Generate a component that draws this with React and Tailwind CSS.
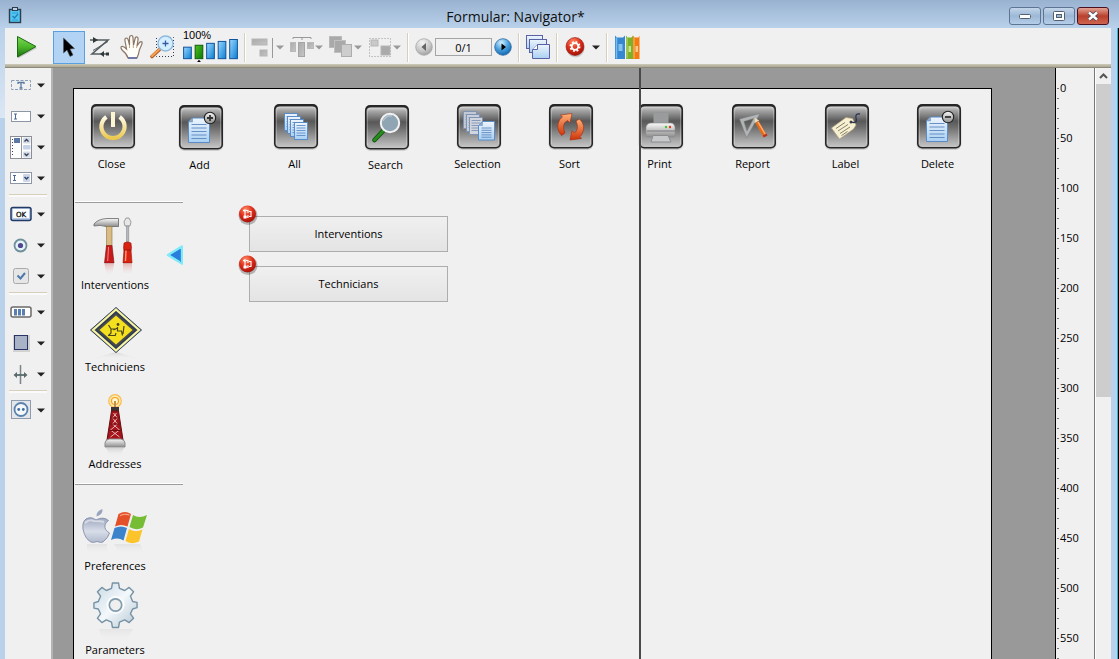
import React, { useState } from 'react';

const rulerMarks = [0, 50, 100, 150, 200, 250, 300, 350, 400, 450, 500, 550];

// Gradients shared by all the icons
const Gradients = () => (
  <svg className="absolute h-0 w-0" aria-hidden="true">
    <defs>
      <linearGradient id="tile" x1="0" y1="0" x2="0" y2="1">
        <stop offset="0" stopColor="#d0d0d0" />
        <stop offset="0.1" stopColor="#a4a4a4" />
        <stop offset="0.36" stopColor="#585858" />
        <stop offset="0.5" stopColor="#6c6c6c" />
        <stop offset="1" stopColor="#c6c6c6" />
      </linearGradient>
      <linearGradient id="gold" x1="0" y1="0" x2="0" y2="1">
        <stop offset="0" stopColor="#fffbe8" />
        <stop offset="1" stopColor="#ecc94e" />
      </linearGradient>
      <linearGradient id="paper" x1="0" y1="0" x2="0" y2="1">
        <stop offset="0" stopColor="#eef5fc" />
        <stop offset="1" stopColor="#a9d0f3" />
      </linearGradient>
      <linearGradient id="silver" x1="0" y1="0" x2="0" y2="1">
        <stop offset="0" stopColor="#fafafa" />
        <stop offset="1" stopColor="#8d8d8d" />
      </linearGradient>
      <linearGradient id="orange" x1="0" y1="0" x2="0" y2="1">
        <stop offset="0" stopColor="#ffb27a" />
        <stop offset="1" stopColor="#cf3208" />
      </linearGradient>
      <linearGradient id="blueBar" x1="0" y1="0" x2="1" y2="1">
        <stop offset="0" stopColor="#9ad6ff" />
        <stop offset="1" stopColor="#0a7fd2" />
      </linearGradient>
      <linearGradient id="greenBar" x1="0" y1="0" x2="1" y2="1">
        <stop offset="0" stopColor="#4fc01d" />
        <stop offset="1" stopColor="#0a7a08" />
      </linearGradient>
      <linearGradient id="play" x1="0" y1="0" x2="0" y2="1">
        <stop offset="0" stopColor="#7fd65a" />
        <stop offset="0.5" stopColor="#4cb82a" />
        <stop offset="1" stopColor="#1d6d10" />
      </linearGradient>
      <linearGradient id="gray" x1="0" y1="0" x2="1" y2="1">
        <stop offset="0" stopColor="#a9a9a9" />
        <stop offset="1" stopColor="#c6c6c6" />
      </linearGradient>
      <linearGradient id="apple" x1="0" y1="0" x2="0" y2="1">
        <stop offset="0" stopColor="#9ba6bf" />
        <stop offset="0.55" stopColor="#d8dde8" />
        <stop offset="1" stopColor="#b1bacd" />
      </linearGradient>
      <linearGradient id="gear" x1="0" y1="0" x2="1" y2="1">
        <stop offset="0" stopColor="#c6d7e2" />
        <stop offset="0.5" stopColor="#f3f8fb" />
        <stop offset="1" stopColor="#b4c6d2" />
      </linearGradient>
      <linearGradient id="fade" x1="0" y1="0" x2="0" y2="1">
        <stop offset="0" stopColor="#b9b9b9" stopOpacity="0.5" />
        <stop offset="1" stopColor="#efefef" stopOpacity="0" />
      </linearGradient>
      <linearGradient id="redFade" x1="0" y1="0" x2="0" y2="1">
        <stop offset="0" stopColor="#d88" stopOpacity="0.5" />
        <stop offset="1" stopColor="#efefef" stopOpacity="0" />
      </linearGradient>
      <radialGradient id="redBall" cx="0.4" cy="0.25" r="0.8">
        <stop offset="0" stopColor="#ff8f6b" />
        <stop offset="0.5" stopColor="#de2d18" />
        <stop offset="1" stopColor="#9c0f08" />
      </radialGradient>
      <radialGradient id="blueBall" cx="0.4" cy="0.25" r="0.8">
        <stop offset="0" stopColor="#d8f0ff" />
        <stop offset="0.5" stopColor="#4da3e0" />
        <stop offset="1" stopColor="#0b5ea8" />
      </radialGradient>
      <radialGradient id="grayBall" cx="0.4" cy="0.25" r="0.8">
        <stop offset="0" stopColor="#f6f6f6" />
        <stop offset="0.6" stopColor="#c6c6c6" />
        <stop offset="1" stopColor="#999" />
      </radialGradient>
    </defs>
  </svg>
);

const Caret = ({ color = '#222' }) => (
  <svg width="8" height="5" viewBox="0 0 8 5" className="shrink-0">
    <path d="M0 0.5h8L4 4.5z" fill={color} />
  </svg>
);

const Separator = () => <div className="h-[29px] w-[2px] shrink-0 border-l border-[#d6cfbc] bg-white" />;

/* ---------- glossy tiles of the form ---------- */

const Tile = ({ children }) => (
  <svg width="46" height="48" viewBox="-1 0 46 48" className="block">
    <rect x="-0.5" y="2" width="45" height="44" rx="6" fill="#000" opacity="0.13" />
    <rect x="0" y="0" width="44" height="44.5" rx="5" fill="#262626" />
    <rect x="1.5" y="2.5" width="41" height="40.5" rx="4" fill="url(#tile)" />
    <path d="M2.5 40V8q0-5 5-5h29q5 0 5 5v32" fill="none" stroke="#fff" strokeOpacity="0.25" />
    {children}
  </svg>
);

const Sheet = ({ x, y, w, h, lines, fill = 'url(#paper)', stroke = '#5b8cc8' }) => (
  <g>
    <path d={`M${x + 4} ${y}h${w - 4}v${h}h${-w}v${-(h - 4)}z`} fill={fill} stroke={stroke} />
    <path d={`M${x} ${y + 4}h4v-4`} fill="#8fa9c6" stroke={stroke} strokeWidth="0.5" />
    {Array.from({ length: lines }).map((_, i) => (
      <path key={i} d={`M${x + 3} ${y + 6.5 + i * ((h - 7) / lines)}h${w - 6}`} stroke="#5c86bf" strokeWidth="0.9" />
    ))}
  </g>
);

// Page of a stack, without the folded corner
const SmallSheet = ({ x, y, fill = 'url(#paper)', stroke = '#5b8cc8' }) => (
  <g>
    <rect x={x} y={y} width="13" height="17" fill={fill} stroke={stroke} />
    <path
      d={`M${x + 2} ${y + 3}h9M${x + 2} ${y + 5.5}h9M${x + 2} ${y + 8}h9M${x + 2} ${y + 10.5}h9M${x + 2} ${y + 13}h9`}
      stroke={stroke}
      strokeWidth="0.9"
    />
  </g>
);

const Badge = ({ plus }) => (
  <g>
    <circle cx="31" cy="13" r="5.7" fill="url(#silver)" stroke="#222" strokeWidth="1.1" />
    <path d={plus ? 'M28 13h6M31 10v6' : 'M28 13h6'} stroke="#333" strokeWidth="1.8" />
  </g>
);

const drawings = {
  close: (
    <g fill="none" stroke="url(#gold)" strokeWidth="4.2">
      <path d="M15.4 12.9A11.6 11.6 0 1 0 28.6 12.9" />
      <rect x="20" y="8" width="4" height="15" fill="#fdf5d2" stroke="none" />
    </g>
  ),
  add: (
    <g>
      <Sheet x={9.5} y={13} w={21} h={24.5} lines={5} />
      <Badge plus />
    </g>
  ),
  all: (
    <g>
      <SmallSheet x={10.5} y={9.5} />
      <SmallSheet x={13.5} y={12.5} />
      <SmallSheet x={16.5} y={15.5} />
      <SmallSheet x={20.5} y={18.5} />
    </g>
  ),
  search: (
    <g>
      <path d="M18 26L9.5 35" stroke="#0f4d0d" strokeWidth="4.6" strokeLinecap="round" />
      <path d="M18 26L9.5 35" stroke="#268c1c" strokeWidth="3" strokeLinecap="round" />
      <circle cx="25" cy="18" r="9.2" fill="#8fa5b4" stroke="#f2f2f2" strokeWidth="2" />
      <path d="M18 16q3-6 9-5" stroke="#b4c4cf" strokeWidth="1.500" fill="none" />
    </g>
  ),
  selection: (
    <g>
      <SmallSheet x={6.5} y={7.5} fill="#c3c9d4" stroke="#7f93b5" />
      <SmallSheet x={9.5} y={10.5} fill="#c9cfd9" stroke="#7f93b5" />
      <SmallSheet x={12.5} y={13.5} fill="#d0d5de" stroke="#7f93b5" />
      <Sheet x={21.5} y={17.5} w={16} h={18.5} lines={5} />
    </g>
  ),
  sort: (
    <g fill="url(#orange)" stroke="#a52a08" strokeWidth="0.6">
      <path d="M12.500 31.500Q6 24 10.500 16Q12 13.600 13.500 13L11.500 11L23 9.500L21 19L18.500 16.500Q12 20 16 29z" />
      <path d="M30.500 15Q37 21 33.500 29Q32.500 31.500 31 32.500L32.500 34.500L21 36L23 26.500L25.500 29Q30.500 25 27 17z" />
    </g>
  ),
  print: (
    <g>
      <rect x="14.500" y="9" width="15" height="13" rx="1" fill="#999b9d" />
      <path d="M12 19h20q3 0 4 4v8q0 2-2 2H9q-2 0-2-2v-8q1-4 5-4z" fill="url(#silver)" stroke="#8a8a8a" strokeWidth="0.6" />
      <path d="M8 27h28" stroke="#75787b" />
      <path d="M14 31.500h15l3 6.500h-20z" fill="#c6c8ca" stroke="#8b8d8f" />
      <circle cx="27" cy="23" r="1.200" fill="#47c430" />
      <circle cx="31" cy="23" r="1.200" fill="#e23c24" />
    </g>
  ),
  report: (
    <g>
      <path d="M7.500 15L28 9.500L14.500 34z M12 17.500L15 27L21.500 14.500z" fill="#b1b4b6" fillRule="evenodd" stroke="#777" strokeWidth="0.500" />
      <path d="M25 18L33 32" stroke="#e46b1a" strokeWidth="4" />
      <path d="M26 18L34 31.500" stroke="#ffb070" strokeWidth="1.300" />
      <path d="M22.800 19L27.200 16.500L22.800 14z" fill="#f3dcb2" />
      <path d="M31.300 32.500L35 30.500" stroke="#bc2f20" strokeWidth="2" />
    </g>
  ),
  label: (
    <g>
      <path d="M6.500 24L21 13.500L27.500 14.500L31 21L28.500 25L14.500 35z" fill="#f8f0d2" stroke="#b5a87c" strokeWidth="0.700" />
      <path d="M11 24.500l9-6M13 27l10-6.500M15 29.500l10-6.500M16.500 31.500l6-4" stroke="#8a826a" />
      <circle cx="26" cy="18" r="1.500" fill="#444" />
      <path d="M26 18q7 2 5-4q-1-5 4-4" fill="none" stroke="#2b3655" strokeWidth="1.300" />
    </g>
  ),
  delete: (
    <g>
      <Sheet x={9.5} y={13} w={21} h={24.5} lines={5} />
      <Badge />
    </g>
  ),
};

// Objects dropped on the form, with their place on it
const formButtons = [
  { icon: 'close', label: 'Close', x: 17, y: 15 },
  { icon: 'add', label: 'Add', x: 105, y: 16 },
  { icon: 'all', label: 'All', x: 200, y: 15 },
  { icon: 'search', label: 'Search', x: 291, y: 16 },
  { icon: 'selection', label: 'Selection', x: 383, y: 15 },
  { icon: 'sort', label: 'Sort', x: 475, y: 15 },
  { icon: 'print', label: 'Print', x: 565, y: 15 },
  { icon: 'report', label: 'Report', x: 658, y: 15 },
  { icon: 'label', label: 'Label', x: 751, y: 15 },
  { icon: 'delete', label: 'Delete', x: 843, y: 15 },
];

const formFields = [
  { label: 'Interventions', x: 175, y: 127 },
  { label: 'Technicians', x: 175, y: 177 },
];

/* ---------- side menu icons ---------- */

const ToolsIcon = () => (
  <svg width="64" height="64" viewBox="0 0 64 64">
    <path d="M11 11Q15 6 24 5.500h11.500v8H23Q17 11.500 11 13z" fill="url(#silver)" stroke="#666" strokeWidth="0.800" />
    <rect x="23.500" y="13.500" width="5.500" height="20" fill="#d9bc84" stroke="#8d7447" strokeWidth="0.600" />
    <path d="M23.500 32.500h5.500l2 17.500h-9.500z" fill="#c81a1a" stroke="#7c0c0c" strokeWidth="0.600" />
    <path d="M25.500 34l-0.800 14" stroke="#f08a8a" />
    <path d="M43 5h3l2 4-1 4h-5l-1-4z" fill="#e7e7e7" stroke="#888" strokeWidth="0.800" />
    <rect x="43.300" y="13" width="2.600" height="16" fill="#b5b9bc" stroke="#777" strokeWidth="0.400" />
    <path d="M41 30q3.500-2 7 0l0.500 5-0.500 2 1 13h-9l1-13-0.500-2z" fill="#d9220f" stroke="#8b1208" strokeWidth="0.600" />
    <path d="M43 37l-0.500 11" stroke="#ff9a80" strokeWidth="1.400" />
    <path d="M40.500 37h8" stroke="#8b1208" strokeWidth="0.800" />
    <path d="M21.500 51h9.500l-2 12h-5.500zM40 51h9v9h-9z" fill="url(#redFade)" />
  </svg>
);

const TechnicianIcon = () => (
  <svg width="64" height="64" viewBox="0 0 64 64">
    <path d="M8 64L33 57L58 64z" fill="url(#fade)" />
    <path d="M33 12.500L58.500 35L33 57.500L7.500 35z" fill="#2d3b52" stroke="#30415f" strokeLinejoin="round" />
    <path d="M33 14.500L56 35L33 55.500L10 35z" fill="none" stroke="#f8f4a0" strokeWidth="2.200" />
    <path d="M33 18L52 35L33 52L14 35z" fill="#4a4b4a" />
    <path d="M33 20.500L49.500 35L33 49.500L16.500 35z" fill="#f5e020" />
    <g fill="none" stroke="#4b4616" strokeWidth="1.200">
      <path d="M25.500 30l2.500 4h4M25 40.500h7M28 34v4l-2.500 2.500M34.500 32v4h4l1 4.500M34.500 33l-4 2M33 38l-1 3M41 31l-1 8" />
      <circle cx="35" cy="29.500" r="1.400" fill="#4b4616" stroke="none" />
    </g>
  </svg>
);

const TowerIcon = () => (
  <svg width="64" height="64" viewBox="0 0 64 64">
    <circle cx="32" cy="9" r="6.300" fill="#fde9b4" stroke="#f8bd52" strokeWidth="1.200" />
    <circle cx="32" cy="9" r="3.500" fill="#fff5d2" stroke="#f6a318" strokeWidth="1.200" />
    <path d="M31 9h2v7h-2z" fill="#b99351" />
    <path d="M28 15h8v4h-8z" fill="#3b3334" />
    <path d="M28.500 19h7l4.500 29h-16z" fill="#a5141b" stroke="#650c10" />
    <path d="M30.500 21l4 5-5 6 7 6-9 7M33.500 21l-4 5 5 6-7 6 9 7" fill="none" stroke="#e5c5c5" strokeWidth="0.900" />
    <path d="M28.500 26h7M27.500 32h9M26.500 38.500h11" stroke="#6d0c10" />
    <path d="M26 47h12q4 1 4 4v4H22v-4q0-3 4-4z" fill="url(#silver)" stroke="#8b8b8b" />
    <path d="M23 56h18l-4 8h-10z" fill="url(#fade)" />
  </svg>
);

const SystemsIcon = () => (
  <svg width="68" height="64" viewBox="0 0 68 64">
    <path d="M15 26Q10 22 5 25Q1 28 2 35Q4 45 10 48Q12 49 16 47.500Q20 49 22 48Q27 44 28.500 39Q23 36 24 31Q24.500 28.500 27.500 26.500Q22 22 15 26z" fill="url(#apple)" stroke="#8c96b0" />
    <path d="M15.500 22.500Q15 17 21.500 15Q22 20.500 15.500 22.500z" fill="#9aa5bd" />
    <path d="M4 29Q8 25 13 27Q20 27 23 28" fill="none" stroke="#fff" strokeOpacity="0.500" strokeWidth="2" />
    <path d="M37.500 20Q44 16 50 20L46.500 32.500Q40 29.500 34 32.500z" fill="#e4502a" />
    <path d="M52 21Q58 25 66 21L62 33.500Q55 37 48.500 33z" fill="#76bd35" />
    <path d="M33.500 34Q40 31 46 34L42.500 46.500Q37 43 30 46z" fill="#3b83cb" />
    <path d="M48 35Q54 39 61.500 35.500L58 47.500Q50 51 44.500 47z" fill="#fcc42a" />
    <path d="M39 21.500Q44 19 48.500 21" stroke="#ffb39a" fill="none" />
    <path d="M6 50h20v10H6zM33 50h26l4 8H38z" fill="url(#fade)" opacity="0.500" />
  </svg>
);

const GearIcon = () => (
  <svg width="64" height="64" viewBox="0 0 64 64">
    <path d="M16 51h34l-7 13H20z" fill="url(#fade)" opacity="0.400" />
    <g transform="translate(32.500 27) scale(0.88)">
      <path
        d="M-3.500-25h7l1 6 6 2.500 5-3.500 5 5-3.500 5 2.500 6 5 1v6l-5 1.500-2.500 5.500 3.500 5-5 5-5-3-6 2.500-1 6h-7l-1-6-6-2.500-5 3-5-5 3.500-5-2.500-5.500-5-1v-6l5-1.500 2.500-6-3.500-5 5-5 5 3.500 6-2.500z"
        fill="url(#gear)"
        stroke="#7692a4"
        strokeWidth="1.600"
        strokeLinejoin="round"
      />
      <circle r="9.500" cx="0" cy="0" fill="none" stroke="#fff" strokeWidth="1.400" />
      <circle r="7" cx="0" cy="0" fill="#efefef" stroke="#829bac" strokeWidth="1.800" />
    </g>
  </svg>
);

const MenuItem = ({ icon, label, className }) => (
  <button type="button" className={`flex w-full flex-col items-center pr-[28px] ${className}`}>
    {icon}
    <span className="leading-4">{label}</span>
  </button>
);

/* ---------- object palette ---------- */

const palette = [
  [
    {
      name: 'Text',
      icon: (
        <>
          <rect x="1.500" y="6.500" width="19" height="9" fill="none" stroke="#8b9db5" strokeDasharray="3 1.500" />
          <path d="M8 10V8.500h6V10M11 8.500v5.500M9.500 14h3" stroke="#5a7aa5" strokeWidth="1.300" fill="none" />
        </>
      ),
    },
    {
      name: 'Input',
      icon: (
        <>
          <rect x="1.500" y="6.500" width="19" height="10" fill="#fff" stroke="#8b97a5" />
          <path d="M4 9h3M4 14h3M5.500 9v5" stroke="#4a6a99" />
        </>
      ),
    },
    {
      name: 'List',
      icon: (
        <>
          <rect x="0.500" y="0.500" width="21" height="22" fill="#fff" stroke="#8b8f95" />
          <path d="M2.500 3v18" stroke="#444" strokeDasharray="1 2" />
          <rect x="4" y="2" width="6" height="5" fill="#5a7aa5" />
          <path d="M11.500 1v21" stroke="#999" />
          <rect x="13" y="1.500" width="7.500" height="6" rx="1" fill="#d5dbe6" />
          <rect x="13" y="9" width="7.500" height="4.500" rx="1" fill="#c5d3ea" />
          <rect x="13" y="15.500" width="7.500" height="6" rx="1" fill="#d5dbe6" />
          <path d="M14.500 5.500l2-2 2 2M14.500 17.500l2 2 2-2" fill="none" stroke="#333e55" strokeWidth="1.300" />
        </>
      ),
    },
    {
      name: 'Combo box',
      icon: (
        <>
          <rect x="0.500" y="5.500" width="21" height="11" fill="#fff" stroke="#8b97a5" />
          <path d="M3 8.500h3M3 13.500h3M4.500 8.500v5" stroke="#4a6a99" />
          <rect x="13" y="7" width="7" height="8" rx="1" fill="#cdd6e6" />
          <path d="M14.500 10l2 2 2-2" fill="none" stroke="#2f4670" strokeWidth="1.500" />
        </>
      ),
    },
  ],
  [
    {
      name: 'Button',
      icon: (
        <>
          <rect x="1" y="4.500" width="20" height="13" rx="2" fill="#b9cde6" stroke="#223a66" strokeWidth="1.500" />
          <rect x="3" y="6" width="16" height="9" fill="#fff" />
          <text x="11" y="13.500" textAnchor="middle" fontSize="7" fontFamily="DejaVu Sans" fill="#111" stroke="#111" strokeWidth="0.300">OK</text>
        </>
      ),
    },
    {
      name: 'Radio button',
      icon: (
        <>
          <circle cx="10.500" cy="11.500" r="6" fill="#e4f3f8" stroke="#6f8f9b" strokeWidth="1.800" />
          <circle cx="10.500" cy="11.500" r="2.600" fill="#4f4590" />
        </>
      ),
    },
    {
      name: 'Check box',
      icon: (
        <>
          <rect x="3.500" y="3.500" width="15" height="15" rx="2" fill="#e6e6e6" stroke="#aaa" />
          <path d="M7.500 10.500l3 3 4.500-5.500" fill="none" stroke="#4d7aab" strokeWidth="2" />
        </>
      ),
    },
  ],
  [
    {
      name: 'Progress bar',
      icon: (
        <>
          <rect x="1" y="6" width="20" height="10" rx="2" fill="#fff" stroke="#6a6a6a" strokeWidth="1.500" />
          <path d="M5.500 8v6.500M9.500 8v6.500M13.500 8v6.500" stroke="#5a7fb0" strokeWidth="3" />
        </>
      ),
    },
    {
      name: 'Rectangle',
      icon: (
        <>
          <rect x="3" y="3" width="17" height="17" fill="#d2d2d2" />
          <rect x="4.500" y="3.500" width="13" height="14" fill="#a9b3c6" stroke="#2a3566" />
        </>
      ),
    },
    {
      name: 'Splitter',
      icon: (
        <>
          <path d="M10.500 2v19" stroke="#7b8585" strokeWidth="1.500" />
          <path d="M5 12h11" stroke="#5a6a6a" strokeWidth="1.800" />
          <path d="M7 9v6L3.500 12zM14 9v6L17.500 12z" fill="#5a6a6a" />
        </>
      ),
    },
  ],
  [
    {
      name: 'Plug-in area',
      icon: (
        <>
          <rect x="1.500" y="1.500" width="19" height="18" fill="#e3e7ec" stroke="#8e9cb0" />
          <circle cx="11" cy="10.500" r="6.500" fill="#f5f8fb" stroke="#5b82ac" strokeWidth="1.800" />
          <circle cx="8.700" cy="10.500" r="1.400" fill="#3f6fa5" />
          <circle cx="13.300" cy="10.500" r="1.400" fill="#3f6fa5" />
        </>
      ),
    },
  ],
];

const Palette = () => (
  <aside className="w-[48px] shrink-0 border-r-2 border-[#b4b4b4] bg-[#f0f0f0] pt-[2px]">
    {palette.map((group, i) => (
      <div key={i}>
        {i > 0 && <div className="mx-1 mb-[2px] h-[3px] border-t border-[#d6cfbc] bg-[#fafafa]" />}
        {group.map((item) => (
          <button key={item.name} type="button" aria-label={item.name} className="flex h-[31px] w-full items-center pl-[5px]">
            <svg width="22" height="23" viewBox="0 0 22 23" className="mr-[5px] shrink-0">
              {item.icon}
            </svg>
            <Caret />
          </button>
        ))}
      </div>
    ))}
  </aside>
);

/* ---------- window parts ---------- */

const TitleBar = () => (
  <header className="flex h-7 shrink-0 items-center bg-gradient-to-b from-[#99b2d0] to-[#b9d1ea] pl-2 pr-[10px]">
    <svg width="14" height="18" viewBox="0 0 14 18" className="mt-1 shrink-0">
      <rect x="1.500" y="2.500" width="11" height="13" fill="#54c4f0" stroke="#2e3c4c" strokeWidth="1.400" />
      <rect x="4.500" y="0.500" width="5" height="3" fill="#b9d1ea" stroke="#2e3c4c" />
      <path d="M4 6h6M4 13h6" stroke="#2a9fd6" />
      <path d="M4.500 9l2 2 3.500-4" fill="none" stroke="#1b7fb8" strokeWidth="1.200" />
    </svg>
    <h1 className="mt-[5px] flex-1 text-center text-[14px] leading-5 text-[#111]">Formular: Navigator*</h1>
    <div className="mt-1 flex gap-[2px]">
      <button type="button" aria-label="Minimize" className="flex h-[18px] w-8 items-center justify-center rounded-[3px] border border-[#5d7593] bg-gradient-to-b from-[#c3d5ea] via-[#9db8d6] to-[#b5cde8]">
        <svg width="12" height="8" viewBox="0 0 12 8">
          <rect x="0.500" y="2.500" width="11" height="4" rx="1" fill="#fff" stroke="#53606f" />
        </svg>
      </button>
      <button type="button" aria-label="Maximize" className="flex h-[18px] w-8 items-center justify-center rounded-[3px] border border-[#5d7593] bg-gradient-to-b from-[#c3d5ea] via-[#9db8d6] to-[#b5cde8]">
        <svg width="12" height="10" viewBox="0 0 12 10">
          <rect x="0.500" y="0.500" width="11" height="9" rx="1" fill="#fff" stroke="#53606f" />
          <rect x="3.500" y="3.500" width="5" height="3" fill="#9db8d6" stroke="#53606f" />
        </svg>
      </button>
      <button type="button" aria-label="Close window" className="flex h-[18px] w-8 items-center justify-center rounded-[3px] border border-[#4b1020] bg-gradient-to-b from-[#e2a295] via-[#b8402c] to-[#cf6450]">
        <svg width="12" height="10" viewBox="0 0 12 10">
          <path d="M2 1.500L10 8.500M10 1.500L2 8.500" stroke="#4d4f5c" strokeWidth="4.200" />
          <path d="M2 1.500L10 8.500M10 1.500L2 8.500" stroke="#fff" strokeWidth="2.400" />
        </svg>
      </button>
    </div>
  </header>
);

const disabledTools = [
  {
    name: 'Align',
    icon: (
      <>
        <rect x="1" y="5" width="15" height="6" fill="url(#gray)" stroke="#b5b5b5" />
        <rect x="9" y="16" width="7" height="6" fill="url(#gray)" stroke="#b5b5b5" />
        <path d="M21.500 4v20" stroke="#999" />
      </>
    ),
  },
  {
    name: 'Distribute',
    icon: (
      <>
        <path d="M3 5V3.500h18V5M12 3v3" stroke="#999" fill="none" />
        <rect x="0.500" y="8.500" width="5" height="9" fill="url(#gray)" stroke="#b9b9b9" />
        <rect x="8.500" y="8.500" width="6" height="14" fill="url(#gray)" stroke="#a5a5a5" />
        <rect x="17.500" y="8.500" width="6" height="6" fill="url(#gray)" stroke="#b9b9b9" />
      </>
    ),
  },
  {
    name: 'Level',
    icon: (
      <>
        <rect x="0.500" y="2.500" width="12" height="11" fill="#a9a9a9" stroke="#b9b9b9" />
        <rect x="5.500" y="6.500" width="11" height="12" fill="#a9a9a9" stroke="#c0c0c0" />
        <rect x="12.500" y="10.500" width="10" height="12" fill="#cdcdcd" stroke="#adadad" />
      </>
    ),
  },
  {
    name: 'Group',
    icon: (
      <>
        <rect x="1.500" y="4.500" width="21" height="18" fill="none" stroke="#999" strokeDasharray="1 2" />
        <rect x="3" y="6" width="7" height="6" fill="#c9c9c9" stroke="#b5b5b5" />
        <rect x="13" y="12" width="9" height="9" fill="#aaa" stroke="#b5b5b5" />
      </>
    ),
  },
];

const Toolbar = () => {
  const [page, setPage] = useState('0/1');

  return (
    <div className="flex h-[36px] shrink-0 items-center bg-[#f0f0f0] pt-[2px]">
      <button type="button" aria-label="Execute form" className="mr-1 flex h-8 w-[44px] items-center justify-center">
        <svg width="22" height="24" viewBox="0 0 22 24">
          <path d="M2 3L21 13L2 23.500z" fill="#000" opacity="0.180" />
          <path d="M1.500 1.500L20 11.500L1.500 22z" fill="url(#play)" stroke="#1d6a12" strokeLinejoin="round" />
        </svg>
      </button>
      <button type="button" aria-label="Select" className="flex h-[33px] w-8 items-center justify-center border border-[#5a9fe0] bg-[#b3d3f4]">
        <svg width="14" height="22" viewBox="0 0 14 22">
          <path d="M1.500 2v15l3.500-3 3 6.500 3-1.500-3-6 4.500-0.500z" fill="#000" stroke="#555" strokeWidth="0.600" />
        </svg>
      </button>
      <button type="button" aria-label="Entry order" className="flex h-8 w-[31px] items-center justify-center">
        <svg width="24" height="22" viewBox="0 0 24 22" fill="none">
          <path d="M1 4h18L3 18h15" stroke="#555d60" strokeWidth="1.600" />
          <path d="M19 5.500L4 14.500" stroke="#555d60" />
          <path d="M4 1l5 3-5 3zM15 15v6l-4-3z" fill="#30383a" />
          <path d="M17 16.500h3v3h-3z" fill="#30383a" />
        </svg>
      </button>
      <button type="button" aria-label="Move" className="flex h-8 w-[31px] items-center justify-center">
        <svg width="24" height="26" viewBox="0 0 24 26">
          <path
            d="M8 24Q7 20 2.500 16.500Q0 13.500 1.500 12.500Q3.500 12 6.500 15L5 7Q4.500 4 6.500 4Q8 4 8.500 7L9.500 11L9.500 4Q9.500 1.500 11.500 1.500Q13 1.500 13 4L13.500 11L15 5Q15.500 2.500 17 3Q18.500 3.500 18 6L17 12L19.500 8.500Q21 7 22 8Q22.500 9 21.500 11Q19 16 18.500 20L17 24z"
            fill="#fffdf8"
            stroke="#8a7667"
            strokeWidth="1.200"
          />
          <path d="M8 24h9" stroke="#6872a5" strokeWidth="1.800" />
          <path d="M9.500 11v3M13.300 11v3M17 12l-0.500 2" stroke="#b9a48c" />
        </svg>
      </button>
      <button type="button" aria-label="Zoom tool" className="mr-[3px] flex h-8 w-[31px] items-center justify-center">
        <svg width="26" height="26" viewBox="0 0 26 26">
          <path d="M6.500 4v18.500h17V3.500h-6" fill="none" stroke="#333a55" strokeDasharray="1 2" />
          <path d="M9 16L2 22.500" stroke="#b35f2c" strokeWidth="3.600" strokeLinecap="round" />
          <path d="M9 15.500L2 22" stroke="#f7a050" strokeWidth="2" strokeLinecap="round" />
          <circle cx="15.500" cy="9.500" r="7.500" fill="#d3efff" stroke="#8fb9dd" strokeWidth="1.400" />
          <path d="M12.500 9.500h6M15.500 6.500v6" stroke="#3a5aa0" strokeWidth="1.300" />
        </svg>
      </button>
      <button type="button" aria-label="Zoom level" className="mr-[4px] flex h-8 w-[59px] flex-col items-start">
        <span className="pl-[2px] font-['Liberation_Sans'] text-[11px] leading-[8px]">100%</span>
        <svg width="59" height="25" viewBox="0 0 59 25" className="block">
          <g stroke="#0b4f99">
            <rect x="1.500" y="8.500" width="8" height="12" fill="url(#blueBar)" />
            <rect x="13.500" y="6.500" width="8" height="14" fill="url(#greenBar)" stroke="#0b5a0b" />
            <rect x="25.500" y="4.500" width="8" height="16" fill="url(#blueBar)" />
            <rect x="37.500" y="2.500" width="8" height="18" fill="url(#blueBar)" />
            <rect x="49.500" y="0.500" width="8" height="20" fill="url(#blueBar)" />
          </g>
          <path d="M17.500 21.500l2 2.500h-4z" fill="#000" />
        </svg>
      </button>
      <Separator />
      <div className="ml-[5px] flex">
        {disabledTools.map((tool) => (
          <button key={tool.name} type="button" disabled aria-label={tool.name} className="flex h-8 w-[39px] items-center gap-px">
            <svg width="24" height="26" viewBox="0 0 24 26" className="shrink-0">
              {tool.icon}
            </svg>
            <Caret color="#999" />
          </button>
        ))}
      </div>
      <Separator />
      <div className="mx-[6px] flex items-center gap-[2px]">
        <button type="button" aria-label="Previous page">
          <svg width="18" height="18" viewBox="0 0 18 18">
            <circle cx="9" cy="9" r="8.300" fill="url(#grayBall)" stroke="#aaa" strokeWidth="0.800" />
            <path d="M11 5v8L6.500 9z" fill="#666" />
          </svg>
        </button>
        <input
          type="text"
          aria-label="Page"
          value={page}
          onChange={(e) => setPage(e.target.value)}
          className="h-[18px] w-[57px] border border-[#a5a5a5] bg-[#f0f0f0] text-center text-[11px] leading-4 text-black"
        />
        <button type="button" aria-label="Next page">
          <svg width="18" height="18" viewBox="0 0 18 18">
            <circle cx="9" cy="9" r="8.300" fill="url(#blueBall)" stroke="#2f6ca5" strokeWidth="0.800" />
            <path d="M7.500 5.500v7L12 9z" fill="#000" />
          </svg>
        </button>
      </div>
      <Separator />
      <button type="button" aria-label="Views" className="mx-[5px]">
        <svg width="26" height="26" viewBox="0 0 26 26">
          <g fill="url(#paper)" stroke="#5a62a5">
            <rect x="1.500" y="1.500" width="16" height="13" />
            <rect x="4.500" y="5.500" width="17" height="13" />
            <path d="M12.500 10.500h12v14h-17v-9z" />
            <path d="M7.500 15.500h5v-5" fill="#fff" />
          </g>
        </svg>
      </button>
      <Separator />
      <button type="button" aria-label="Form actions" className="mx-[6px] flex items-center gap-[6px]">
        <svg width="22" height="22" viewBox="0 0 22 22">
          <circle cx="11.500" cy="12.500" r="9" fill="#000" opacity="0.150" />
          <circle cx="11" cy="10.500" r="9" fill="url(#redBall)" stroke="#8d150c" strokeWidth="0.600" />
          <circle cx="11" cy="10.500" r="3.300" fill="none" stroke="#fff" strokeWidth="1.800" />
          <circle cx="11" cy="10.500" r="4.600" fill="none" stroke="#fff" strokeWidth="1.800" strokeDasharray="1.800 1.812" />
        </svg>
        <Caret />
      </button>
      <Separator />
      <button type="button" aria-label="Library" className="ml-[6px]">
        <svg width="26" height="26" viewBox="0 0 26 26">
          <path d="M1 1.500l2 2h6l2-2v23.500H1z" fill="#3588d0" />
          <path d="M2.500 3.500v21" stroke="#7bbcf0" strokeWidth="1.500" />
          <rect x="4.500" y="10" width="4" height="7" fill="#86c1ee" />
          <path d="M12 1.500l1.500 2h4l1.500-2v23.500h-7z" fill="#7fb02c" />
          <path d="M13 3.500v21" stroke="#b9dc72" />
          <rect x="14.500" y="12" width="2.500" height="6" fill="#c9e48c" />
          <path d="M19 1.500l1.500 2h4l1-2v23.500H19z" fill="#f47b10" />
          <path d="M20 3.500v21" stroke="#ffbb6b" />
          <rect x="21.500" y="12" width="2.500" height="6" fill="#ffc98a" />
        </svg>
      </button>
    </div>
  );
};

const SideMenu = () => (
  <nav className="ml-px w-[108px] pt-[112px]">
    <hr className="border-t border-b border-t-white border-b-[#9d9d9d]" />
    <MenuItem icon={<ToolsIcon />} label="Interventions" className="mt-[10px]" />
    <MenuItem icon={<TechnicianIcon />} label="Techniciens" className="mt-[2px]" />
    <MenuItem icon={<TowerIcon />} label="Addresses" className="mt-[17px]" />
    <hr className="mt-[11px] border-t border-b border-t-white border-b-[#9d9d9d]" />
    <MenuItem icon={<SystemsIcon />} label="Preferences" className="mt-[9px]" />
    <MenuItem icon={<GearIcon />} label="Parameters" className="mt-[4px]" />
  </nav>
);

const FormPage = () => (
  <main className="relative mt-5 ml-5 h-[900px] w-[919px] border border-black bg-[#f0f0f0]">
    <SideMenu />

    {formButtons.map((item) => (
      <button
        key={item.label}
        type="button"
        className="absolute flex w-[72px] flex-col items-center"
        style={{ left: item.x - 14, top: item.y }}
      >
        <Tile>{drawings[item.icon]}</Tile>
        <span className="mt-1 pr-[3px] leading-4">{item.label}</span>
      </button>
    ))}

    {formFields.map((field) => (
      <div key={field.label} className="absolute" style={{ left: field.x, top: field.y }}>
        <button type="button" className="h-9 w-[199px] border border-[#adadad] bg-gradient-to-b from-[#f0f0f0] to-[#e4e4e4] leading-4">
          {field.label}
        </button>
        <svg width="22" height="22" viewBox="0 0 22 22" className="absolute -top-3 -left-3">
          <circle cx="11" cy="11.500" r="9.500" fill="#000" opacity="0.250" />
          <circle cx="10.500" cy="10" r="8.500" fill="url(#redBall)" />
          <path d="M6 6l2.500-1v3L6 7zM6.500 11.500h3v3h-3z" fill="#fff" />
          <path d="M8 7v5M8.500 6.500h2M9 13h2M11 6v3M11 11v3M12 7.500h2v5h-2" fill="none" stroke="#fff" strokeWidth="1.100" />
        </svg>
      </div>
    ))}

    {/* Marker of the current menu entry */}
    <svg width="17" height="20" viewBox="0 0 17 20" className="absolute top-[156px] left-[92px]">
      <path d="M2 10L16 1.500v17z" fill="#2a86e0" stroke="#7feaf8" strokeWidth="2.600" strokeLinejoin="round" />
      <path d="M4.500 10L14.500 4v12z" fill="#2a7fdc" />
    </svg>
  </main>
);

const Ruler = () => (
  <div className="w-[40px] shrink-0 overflow-hidden border-r border-l border-r-[#777] border-l-black bg-[#f0f0f0] pt-[11px]">
    {rulerMarks.map((mark) => (
      <div key={mark} className="flex h-[50px] pl-px">
        <div className="w-[3px]">
          {[0, 1, 2, 3, 4].map((tick) => (
            <div key={tick} className="h-[10px] w-[2px] border-b border-[#777]" />
          ))}
        </div>
        <span className="leading-[18px]">{mark}</span>
      </div>
    ))}
  </div>
);

const ScrollBar = () => (
  <div className="flex w-4 shrink-0 flex-col border-l border-white bg-[#f0f0f0]">
    <button type="button" aria-label="Scroll up" className="flex h-4 items-center justify-center">
      <svg width="9" height="6" viewBox="0 0 9 6">
        <path d="M1 5l3.500-3.500L8 5" fill="none" stroke="#555" strokeWidth="2" />
      </svg>
    </button>
    <div className="h-[53%] bg-[#cdcdcd]" />
  </div>
);

const App = () => {
  return (
    <div className="flex h-screen flex-col overflow-hidden bg-[#b9d1ea] font-['Open_Sans',sans-serif] text-[11px] text-black">
      <Gradients />
      <TitleBar />
      <div className="flex min-h-0 flex-1">
        <div className="w-[5px] shrink-0 bg-[#b9d1ea]">
          <div className="h-[90px] bg-gradient-to-b from-[#b9d1ea] to-[#dbe7f5]" />
        </div>
        <div className="flex min-w-0 flex-1 flex-col">
          <Toolbar />
          <div className="h-1 shrink-0 border-b border-[#8f8b78] bg-gradient-to-b from-[#cfcbb9] to-[#a9a693]" />
          <div className="flex min-h-0 flex-1">
            <Palette />
            <div className="relative min-w-0 flex-1 overflow-hidden bg-[#999]">
              <FormPage />
              {/* Page limit line */}
              <div className="absolute inset-y-0 left-[586px] w-[2px] bg-[#4a4a4a]" />
            </div>
            <Ruler />
            <ScrollBar />
          </div>
        </div>
        <div className="w-2 shrink-0 border-r border-black bg-[#b9d1ea]">
          <div className="ml-auto h-full w-px bg-[#35b6d8]" />
        </div>
      </div>
    </div>
  );
};

export default App;
